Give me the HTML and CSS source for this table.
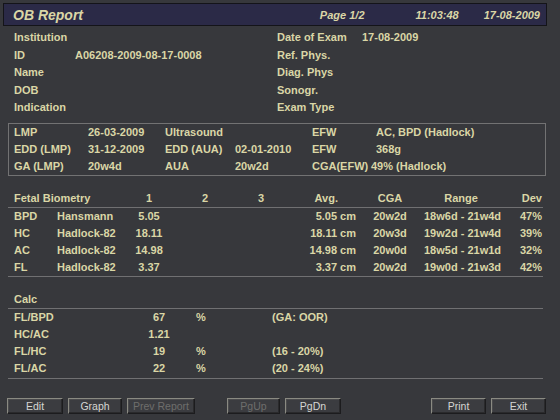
FILE: index.html
```html
<!DOCTYPE html>
<html>
<head>
<meta charset="utf-8">
<link rel="stylesheet" href="styles.css">
</head>
<body>
<div class="page">
  <div class="header">
    <span class="title">OB Report</span>
    <span class="hpage">Page 1/2</span>
    <span class="htime">11:03:48</span>
    <span class="hdate">17-08-2009</span>
  </div>

  <div class="info">
    <span>Institution</span><span></span><span>Date of Exam</span><span>17-08-2009</span>
    <span>ID</span><span>A06208-2009-08-17-0008</span><span>Ref. Phys.</span><span></span>
    <span>Name</span><span></span><span>Diag. Phys</span><span></span>
    <span>DOB</span><span></span><span>Sonogr.</span><span></span>
    <span>Indication</span><span></span><span>Exam Type</span><span></span>
  </div>

  <div class="box">
    <span>LMP</span><span>26-03-2009</span><span>Ultrasound</span><span></span><span>EFW</span><span>AC, BPD (Hadlock)</span>
    <span>EDD (LMP)</span><span>31-12-2009</span><span>EDD (AUA)</span><span>02-01-2010</span><span>EFW</span><span>368g</span>
    <span>GA (LMP)</span><span>20w4d</span><span>AUA</span><span>20w2d</span><span class="nowrap">CGA(EFW)</span><span class="tight">49% (Hadlock)</span>
  </div>

  <div class="bio">
    <div class="brow bhead">
      <span>Fetal Biometry</span><span></span><span class="c">1</span><span class="c">2</span><span class="c">3</span><span class="r avgh">Avg.</span><span class="c">CGA</span><span class="c">Range</span><span class="r">Dev</span>
    </div>
    <div class="brow">
      <span>BPD</span><span>Hansmann</span><span class="c">5.05</span><span></span><span></span><span class="r">5.05 cm</span><span class="c">20w2d</span><span class="c">18w6d - 21w4d</span><span class="r">47%</span>
    </div>
    <div class="brow">
      <span>HC</span><span>Hadlock-82</span><span class="c">18.11</span><span></span><span></span><span class="r">18.11 cm</span><span class="c">20w3d</span><span class="c">19w2d - 21w4d</span><span class="r">39%</span>
    </div>
    <div class="brow">
      <span>AC</span><span>Hadlock-82</span><span class="c">14.98</span><span></span><span></span><span class="r">14.98 cm</span><span class="c">20w0d</span><span class="c">18w5d - 21w1d</span><span class="r">32%</span>
    </div>
    <div class="brow">
      <span>FL</span><span>Hadlock-82</span><span class="c">3.37</span><span></span><span></span><span class="r">3.37 cm</span><span class="c">20w2d</span><span class="c">19w0d - 21w3d</span><span class="r">42%</span>
    </div>
  </div>

  <div class="calc">
    <div class="crow chead"><span>Calc</span></div>
    <div class="crow"><span>FL/BPD</span><span class="c">67</span><span class="c">%</span><span></span><span>(GA: OOR)</span></div>
    <div class="crow"><span>HC/AC</span><span class="c">1.21</span><span></span><span></span><span></span></div>
    <div class="crow"><span>FL/HC</span><span class="c">19</span><span class="c">%</span><span></span><span>(16 - 20%)</span></div>
    <div class="crow"><span>FL/AC</span><span class="c">22</span><span class="c">%</span><span></span><span>(20 - 24%)</span></div>
  </div>

  <div class="buttons">
    <div class="group">
      <button class="btn w56">Edit</button>
      <button class="btn w54">Graph</button>
      <button class="btn w68 off">Prev Report</button>
    </div>
    <div class="group mid">
      <button class="btn w53 off">PgUp</button>
      <button class="btn w56">PgDn</button>
    </div>
    <div class="group right">
      <button class="btn w55">Print</button>
      <button class="btn w55">Exit</button>
    </div>
  </div>
</div>
</body>
</html>
```
FILE: styles.css
```css
* { box-sizing: border-box; }
html, body {
  margin: 0;
  padding: 0;
  background: #37383c;
}
body {
  width: 560px;
  height: 420px;
  overflow: hidden;
  font-family: "Liberation Sans", Arial, sans-serif;
  font-size: 11px;
  font-weight: bold;
  color: #dad6a6;
}
.page {
  display: flex;
  flex-direction: column;
}
.header {
  margin: 3px 13px 0 3px;
  height: 23px;
  background: #2b2a47;
  border: 1px solid #141419;
  display: flex;
  align-items: center;
  padding: 0 6px 0 9px;
  font-style: italic;
}
.title {
  font-size: 14px;
  flex: 1;
}
.hpage { margin-right: 51px; }
.htime { margin-right: 25px; }

.info {
  margin-top: 2px;
  padding-top: 1px;
  padding-left: 14px;
  display: grid;
  grid-template-columns: 61px 202px 85px 1fr;
  grid-auto-rows: 17.5px;
  line-height: 17.5px;
  white-space: nowrap;
}

.box {
  margin: 6px 0 0 8px;
  width: 538px;
  height: 53px;
  border: 1px solid #727273;
  padding-left: 5px;
  display: grid;
  grid-template-columns: 74px 77px 70px 77px 64px 1fr;
  grid-auto-rows: 17px;
  line-height: 17px;
  white-space: nowrap;
}
.nowrap { white-space: nowrap; }
.tight { margin-left: -5px; }

.bio {
  margin: 14px 0 0 8px;
  width: 535px;
  border-bottom: 1px solid #707072;
}
.brow {
  display: grid;
  grid-template-columns: 43px 64px 56px 56px 56px 67px 68px 74px 44px;
  height: 17px;
  line-height: 17px;
  padding-left: 6px;
  white-space: nowrap;
}
.bhead {
  border-bottom: 1px solid #707072;
  height: 18px;
}
.c { text-align: center; }
.r { text-align: right; }
.avgh { padding-right: 18px; }

.calc {
  margin: 14px 0 0 8px;
  width: 535px;
  border-bottom: 1px solid #707072;
}
.crow {
  display: grid;
  grid-template-columns: 116px 58px 26px 58px 1fr;
  height: 17.25px;
  line-height: 17.25px;
  padding-left: 6px;
  white-space: nowrap;
}
.chead {
  height: 18px;
  line-height: 17px;
  border-bottom: 1px solid #707072;
}

.buttons {
  margin-top: 19px;
  display: flex;
  padding-left: 7px;
}
.group {
  display: flex;
  gap: 5px;
}
.mid { margin-left: 32px; }
.right { margin-left: 90px; }
.btn {
  height: 16px;
  padding: 0;
  background: #3b3c40;
  border: 1px solid #8a8a82;
  border-right-color: #1c1c1e;
  border-bottom-color: #1c1c1e;
  box-shadow: inset -1px -1px 0 #2a2a2c, inset 1px 1px 0 #4a4a4c;
  color: #d6d6d2;
  font-family: "Liberation Sans", Arial, sans-serif;
  font-size: 10.5px;
  font-weight: normal;
  line-height: 14px;
  text-align: center;
}
.btn.off { color: #6e6e6c; }
.w53 { width: 53px; }
.w54 { width: 54px; }
.w55 { width: 55px; }
.w56 { width: 56px; }
.w68 { width: 68px; }
```
